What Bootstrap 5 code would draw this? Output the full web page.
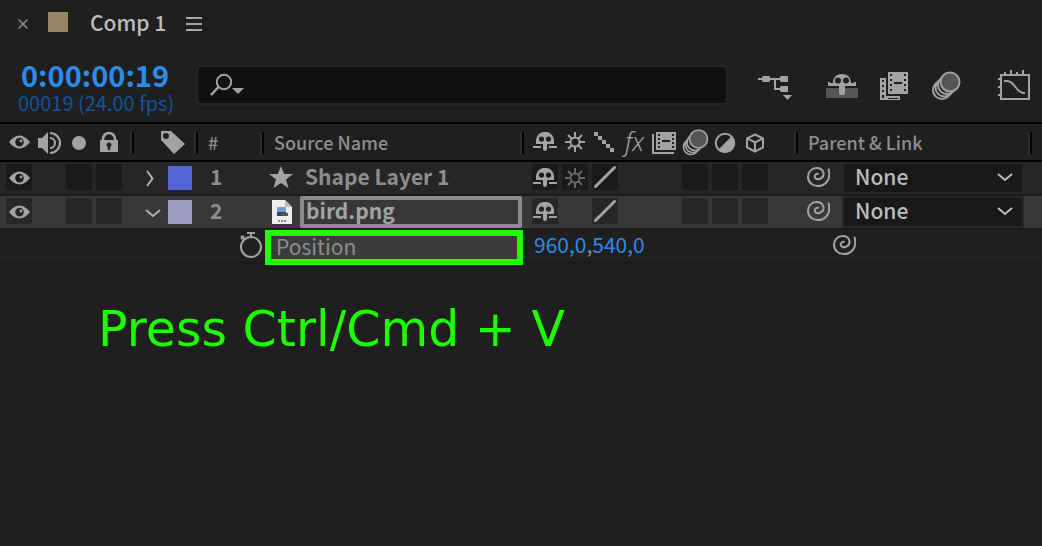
<!DOCTYPE html>
<html lang="en">
<head>
<meta charset="utf-8">
<meta name="viewport" content="width=device-width, initial-scale=1">
<title>Comp 1</title>
<link href="https://cdn.jsdelivr.net/npm/bootstrap@5.3.0/dist/css/bootstrap.min.css" rel="stylesheet">
<style>
:root{--panel:#1f1f1f;--ink:#a3a3a3;--muted:#8e8e8e;--hot:#2d8ceb}
body{background:var(--panel);color:var(--muted);font-family:"Noto Sans CJK SC",sans-serif;font-size:21px;line-height:24px;font-weight:500}
svg{display:block;overflow:visible;flex:none}
.ico{fill:var(--ink);stroke:none}
.plain{background:none;border:0;padding:0;color:inherit;flex:none}
.tabbar{height:48px;padding-left:18px}
.comp-swatch{width:20px;height:20px;background:#988565;margin:0 22px 4px 20px}
.comp-title{color:#bdbdbd;margin:0 20px 4px 0}
.toolbar{height:74px;padding:0 12px 0 18px}
.timebox{width:178px;padding-top:5px}
.timecode{color:var(--hot);font-size:29px;font-weight:700;line-height:30px;padding-left:3px}
.frames{color:#15549a;font-size:20px;font-weight:400;line-height:28px}
.search-field{height:40px;background:#111;border:2px solid #262626;border-radius:5px;padding-left:12px}
.search-field input{background:none;border:0;outline:0;color:#bdbdbd;min-width:0}
.tools{gap:22px;padding-left:30px}
.layers{table-layout:fixed;border-top:2px solid #000}
.layers th,.layers td{padding:0;vertical-align:top;font-weight:inherit}
.layers thead th{height:38px;border-bottom:2px solid #000;font-size:18px;line-height:28px;padding-top:4px;background:linear-gradient(90deg,#2b2b2b 50%,#000 50%) right 8px/4px 22px no-repeat}
.layers thead th:last-child{background:none}
.layers thead .heading{padding-left:10px}
.layers tbody td{height:34px;border-bottom:2px solid #1b1b1b;padding-top:2px}
.row-plain td{background:#262626}
.row-picked td{background:#383838}
.slots{gap:4px;padding-left:6px}
.switches{padding-left:8px}
.slot{width:26px;height:26px;flex:none}
.slot.well{background:#1a1a1a}
.row-picked .slot.well{background:#272727}
.fxmark{font:italic 300 25px/26px "Noto Sans",sans-serif;color:var(--ink);padding-left:3px}
.label-swatch{width:24px;height:24px;margin-top:2px}
.label-cell{padding-left:10px;gap:8px}
.num{padding-left:12px;font-weight:700}
.layer-name{padding-left:5px;gap:12px;font-weight:700}
.layers .flush{padding-top:0}
.file-name{padding-left:8px;gap:8px}
.rename{height:32px;width:222px;border:4px solid #8c8c8c;border-radius:2px;background:#383838;color:var(--ink);font-weight:700;padding:0 2px 4px;outline:0;line-height:20px}
.prop-name{height:35px;margin:0 1px -3px;border:6px solid #1eff00;background:#3b3b3b;padding-left:5px;line-height:20px;font-weight:400;position:relative}
.prop-value{padding-left:10px;font-weight:400}
.prop-value a{color:var(--hot);text-decoration:none}
.parent-cell{padding-left:6px;gap:14px}
.parent-cell .form-select{width:178px;height:28px;border:0;border-radius:0;padding:0 30px 4px 11px;font-size:21px;font-weight:500;line-height:24px;color:#bdbdbd;background-color:#181818;outline:2px solid #262626;background-position:right 9px center;background-size:16px 10px;--bs-form-select-bg-img:url("data:image/svg+xml,%3Csvg xmlns='http://www.w3.org/2000/svg' viewBox='0 0 16 10'%3E%3Cpath d='M1 1l7 6 7-6' fill='none' stroke='%23bdbdbd' stroke-width='2'/%3E%3C/svg%3E")}
.prop-whip{padding-left:32px}
.hint{color:#1eff00;font:400 49px/60px "DejaVu Sans",sans-serif;margin:36px 0 0 98px}
</style>
</head>
<body>
<svg width="0" height="0" class="position-absolute" aria-hidden="true">
<defs>
<symbol id="eye" viewBox="0 0 26 26"><path fill-rule="evenodd" d="M3 14Q8 7.500 13.500 7.500T24 14Q19 20.500 13.500 20.500T3 14zM13.500 9.800a4.300 4.300 0 1 0 0 8.600a4.300 4.300 0 1 0 0-8.600z"/><circle cx="15" cy="13" r="1.400"/></symbol>
<symbol id="shy" viewBox="0 0 26 26"><path fill-rule="evenodd" d="M4 16V12C5 6.500 8 4 13 4s8 2.500 9 8v4h-7v5q0 2-2 2t-2-2v-5zM9.500 8.500a2.600 2.600 0 1 0 0 5.200a2.600 2.600 0 1 0 0-5.200zM16.500 8.500a2.600 2.600 0 1 0 0 5.200a2.600 2.600 0 1 0 0-5.200z"/><path d="M1 18h8v2H1zM17 18h8v2h-8z"/></symbol>
<symbol id="sun" viewBox="0 0 26 26"><g fill="none" stroke="currentColor" stroke-width="2"><circle cx="13" cy="14" r="4.500"/><path d="M13 4v5M13 19v5M3 14h5M18 14h5M6 7l3.500 3.500M16.500 17.500L20 21M20 7l-3.500 3.500M9.500 17.500L6 21"/></g></symbol>
<symbol id="slash" viewBox="0 0 26 26"><path d="M3.500 22.500L22.500 3.500" stroke="currentColor" stroke-width="3" stroke-linecap="round"/></symbol>
<symbol id="whip" viewBox="0 0 26 26"><path d="M14 9.800C11.500 9.800 10.500 11.500 10.800 13C11.200 15 13.500 15.800 16 14.800C18.800 13.600 20 11 19.300 8.500C18.500 5.500 15.500 4 12.500 4C7.500 4 4 8 4 12.800C4 18.500 8.500 22 13.800 22C20.500 22 25.300 17 25.300 10.500C25.300 8.500 25 7 24.600 5.500" fill="none" stroke="currentColor" stroke-width="2" stroke-linecap="round"/></symbol>
</defs>
</svg>

<header>
<div class="tabbar d-flex align-items-center">
<button class="plain" aria-label="Close tab"><svg width="10" height="10" viewBox="0 0 10 10"><path d="M.5.5l9 9M9.500.5l-9 9" stroke="#8e8e8e" stroke-width="1.500"/></svg></button>
<span class="comp-swatch"></span>
<span class="comp-title">Comp 1</span>
<button class="plain" aria-label="Panel menu"><svg class="ico" width="16" height="14"><path d="M0 0h16v2H0zM0 6h16v2H0zM0 12h16v2H0z"/></svg></button>
</div>
<div class="toolbar d-flex align-items-center">
<div class="timebox flex-shrink-0"><div class="timecode">0:00:00:19</div><div class="frames">00019 (24.00 fps)</div></div>
<label class="search-field d-flex flex-grow-1 align-items-center">
<svg width="34" height="24" viewBox="0 0 34 24"><g fill="none" stroke="#a3a3a3" stroke-width="2"><circle cx="14" cy="9" r="7.200"/><path d="M8.500 14L1 22" stroke-width="2.500"/></g><path d="M22 15h12l-6 6z" fill="#a3a3a3"/></svg>
<input class="flex-grow-1" type="text" aria-label="Search layers">
</label>
<div class="tools d-flex flex-shrink-0">
<button class="plain" aria-label="Mini-flowchart"><svg class="ico" width="46" height="34"><path d="M0 10h4V9l1-1h6l1 1v1h10V9l1-1h7v6h-7l-1-1v-1h-4v8h4v-1l1-1h7v6h-7l-1-1v-1h-6V12h-4v1l-1 1H5l-1-1v-1H0zM25 27h9l-4.500 5z"/></svg></button>
<button class="plain" aria-label="Hide shy layers"><svg class="ico" width="32" height="34"><path fill="#565656" d="M0 20h32v10H0z"/><path fill-rule="evenodd" d="M2 18v-4q2-1 2 1h3c0-6 4-9 9-9s9 3 9 9h3q0-2 2-1v4H19v7q0 2-3 2t-3-2v-7zM12 9.500a3 3 0 1 0 0 6a3 3 0 1 0 0-6zM20 9.500a3 3 0 1 0 0 6a3 3 0 1 0 0-6z"/></svg></button>
<button class="plain" aria-label="Frame blending"><svg class="ico" width="30" height="34"><path fill-rule="evenodd" d="M8 4h20v22H8zM10 6v2h2V6zM10 11v2h2v-2zM10 16v2h2v-2zM10 21v2h2v-2zM24 6v2h2V6zM24 11v2h2v-2zM24 16v2h2v-2zM24 21v2h2v-2zM14 14v2h8v-2z"/><path fill-rule="evenodd" d="M0 10h6v18h14v4H0zM2 12v2h2v-2zM2 17v2h2v-2zM2 22v2h2v-2zM2 27v3h2v-3zM8 30h10v1H8z"/></svg></button>
<button class="plain" aria-label="Motion blur"><svg width="44" height="34"><g stroke="#a3a3a3" stroke-width="2" fill="#1f1f1f"><circle cx="10" cy="22" r="9"/><circle cx="12.500" cy="19.500" r="9"/><circle cx="15" cy="17" r="9"/><circle cx="18" cy="14" r="9.500" fill="#565656"/></g></svg></button>
<button class="plain" aria-label="Graph editor"><svg width="32" height="34"><path d="M3 7h28v24H3zM7 7V4M13 7V2M19 7V4M25 7V2M0 11h3M0 19h3M0 27h3M6 13h3c8 0 9 12 17 12h1" fill="none" stroke="#a3a3a3" stroke-width="2"/></svg></button>
</div>
</div>
</header>

<main>
<table class="layers w-100">
<colgroup><col style="width:134px"><col style="width:64px"><col style="width:66px"><col style="width:260px"><col style="width:274px"><col style="width:234px"><col></colgroup>
<thead><tr>
<th><div class="slots d-flex">
<svg class="slot ico"><use href="#eye"/></svg>
<svg class="slot ico" viewBox="0 0 26 26"><path d="M2 10h4l6-6v22l-6-6H2z"/><path d="M14 10a5 5 0 0 1 0 10M14 5a10 10 0 0 1 0 20" fill="none" stroke="#a3a3a3" stroke-width="2.200"/></svg>
<svg class="slot ico" viewBox="0 0 26 26"><circle cx="13" cy="15" r="7"/></svg>
<svg class="slot ico" viewBox="0 0 26 26"><path d="M7 14V11a6 6 0 0 1 12 0v3" fill="none" stroke="#a3a3a3" stroke-width="2.600"/><path fill-rule="evenodd" d="M4 12h18v12H4zM13 14.500a2.500 2.500 0 0 0-1.300 4.600V22h2.600v-2.900A2.500 2.500 0 0 0 13 14.500z"/></svg>
</div></th>
<th aria-label="Label"><svg class="slot ico ms-4" viewBox="0 0 26 26"><path fill-rule="evenodd" d="M3 3h10l14 13-11 10L3 12zM8 5a3 3 0 1 0 0 6a3 3 0 1 0 0-6z"/></svg></th>
<th class="heading">#</th>
<th class="heading">Source Name</th>
<th><div class="slots switches d-flex">
<svg class="slot ico"><use href="#shy"/></svg>
<svg class="slot ico" style="color:#a3a3a3"><use href="#sun"/></svg>
<svg class="slot ico" viewBox="0 0 26 26"><path d="M2 4h4v4H2zM6 8h4v4H6zM10 12h4v4h-4zM14 16h4v4h-4zM18 20h4v4h-4z"/></svg>
<span class="slot fxmark">fx</span>
<svg class="slot ico" viewBox="0 0 26 26"><path fill-rule="evenodd" d="M4 4h20v18H4zM6 6v2h2V6zM6 10v2h2v-2zM6 14v2h2v-2zM6 18v2h2v-2zM20 6v2h2V6zM20 10v2h2v-2zM20 14v2h2v-2zM20 18v2h2v-2zM10 12v2h8v-2z"/><path d="M0 6h2v18h20v2H0z"/></svg>
<svg class="slot" viewBox="0 0 26 26"><g stroke="#a3a3a3" stroke-width="1.700" fill="#1f1f1f"><circle cx="9" cy="19" r="7.500"/><circle cx="11" cy="17" r="7.500"/><circle cx="13" cy="14.500" r="8"/><circle cx="16.500" cy="11" r="9" fill="#565656"/></g></svg>
<svg class="slot ico" viewBox="0 0 26 26"><circle cx="13" cy="15" r="9.200" fill="none" stroke="#a3a3a3" stroke-width="2"/><path d="M19.500 8.500L6.500 21.500A9.200 9.200 0 0 0 19.500 8.500z"/></svg>
<svg class="slot" viewBox="0 0 26 26"><path d="M13 6.500l8 3.800v9L13 23.500l-8-4.200v-9zM5 10.300l8 4 8-4M13 14.300v9" fill="none" stroke="#a3a3a3" stroke-width="2"/></svg>
</div></th>
<th class="heading">Parent &amp; Link</th>
<th></th>
</tr></thead>
<tbody>
<tr class="row-plain">
<td><div class="slots d-flex"><svg class="slot ico well"><use href="#eye"/></svg><span class="slot"></span><span class="slot well"></span><span class="slot well"></span></div></td>
<td><div class="label-cell d-flex"><svg width="16" height="26"><path d="M3 7l5.500 7.500L3 22" fill="none" stroke="#b0b0b0" stroke-width="2"/></svg><span class="label-swatch" style="background:#5465d7"></span></div></td>
<td><div class="num">1</div></td>
<td><div class="layer-name d-flex"><svg class="ico" width="24" height="26"><path d="M12 2l3.200 8H24l-7 5.500L19.500 24 12 19l-7.500 5L7 15.500 0 10h8.800z"/></svg><span>Shape Layer 1</span></div></td>
<td><div class="slots switches d-flex"><svg class="slot ico well"><use href="#shy"/></svg><svg class="slot well" style="color:#686868"><use href="#sun"/></svg><svg class="slot well" style="color:#a3a3a3"><use href="#slash"/></svg><span class="slot"></span><span class="slot"></span><span class="slot well"></span><span class="slot well"></span><span class="slot well"></span></div></td>
<td><div class="parent-cell d-flex"><svg class="slot" style="color:#a3a3a3"><use href="#whip"/></svg><select class="form-select" aria-label="Parent of layer 1"><option>None</option></select></div></td>
<td></td>
</tr>
<tr class="row-picked">
<td><div class="slots d-flex"><svg class="slot ico well"><use href="#eye"/></svg><span class="slot"></span><span class="slot well"></span><span class="slot well"></span></div></td>
<td><div class="label-cell d-flex"><svg width="16" height="26"><path d="M2 12l7 6 7-6" fill="none" stroke="#b0b0b0" stroke-width="2"/></svg><span class="label-swatch" style="background:#9b99bf"></span></div></td>
<td><div class="num">2</div></td>
<td class="flush"><div class="file-name d-flex"><svg width="20" height="32"><path d="M0 4h13l7 7v17H0z" fill="#eee"/><path d="M13 4l7 7h-7z" fill="#bdbdbd"/><path d="M5 11h9v5H5z" fill="#6f9fdd"/><path d="M5 16h9v4H5z" fill="#33435a"/><path d="M9 17h7v3H9z" fill="#555"/><path d="M6 25h2M9 25h2M12 25h2" stroke="#888" stroke-width="2"/></svg><input class="rename" type="text" value="bird.png" aria-label="Layer name"></div></td>
<td><div class="slots switches d-flex"><svg class="slot ico well"><use href="#shy"/></svg><span class="slot"></span><svg class="slot well" style="color:#a3a3a3"><use href="#slash"/></svg><span class="slot"></span><span class="slot"></span><span class="slot well"></span><span class="slot well"></span><span class="slot well"></span></div></td>
<td><div class="parent-cell d-flex"><svg class="slot" style="color:#a3a3a3"><use href="#whip"/></svg><select class="form-select" aria-label="Parent of layer 2"><option>None</option></select></div></td>
<td></td>
</tr>
<tr>
<td></td><td></td>
<td><button class="plain d-block ms-auto" aria-label="Toggle position animation"><svg width="24" height="26"><g fill="none" stroke="#a3a3a3" stroke-width="2"><circle cx="11" cy="15" r="10"/><path d="M7 1h8M11 1v4M1 4l4 4M1 7l3-3"/></g></svg></button></td>
<td class="flush"><div class="prop-name">Position</div></td>
<td><div class="prop-value"><a href="#">960,0</a>,<a href="#">540,0</a></div></td>
<td><div class="prop-whip"><svg class="slot" style="color:#a3a3a3"><use href="#whip"/></svg></div></td>
<td></td>
</tr>
</tbody>
</table>
<p class="hint">Press Ctrl/Cmd + V</p>
</main>
<script src="https://cdn.jsdelivr.net/npm/bootstrap@5.3.0/dist/js/bootstrap.bundle.min.js"></script>
</body>
</html>
